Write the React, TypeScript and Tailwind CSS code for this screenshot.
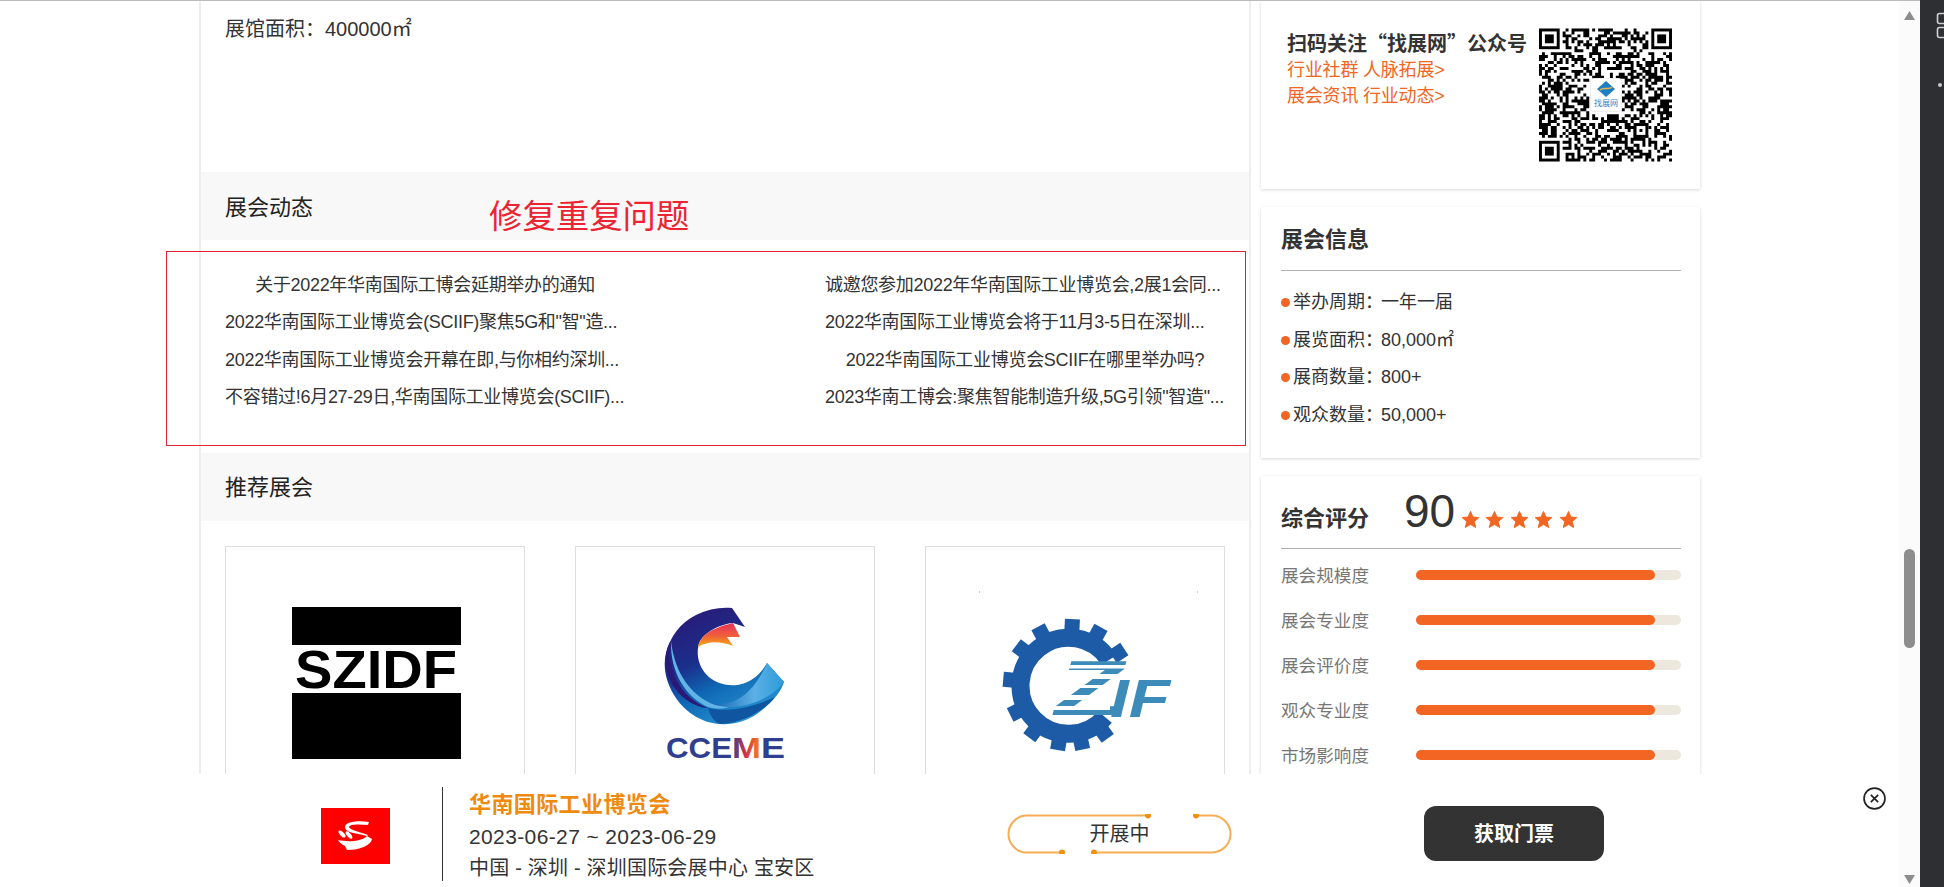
const LEFT_NEWS = [
  "关于2022年华南国际工博会延期举办的通知",
  "2022华南国际工业博览会(SCIIF)聚焦5G和\"智\"造...",
  "2022华南国际工业博览会开幕在即,与你相约深圳...",
  "不容错过!6月27-29日,华南国际工业博览会(SCIIF)...",
];
const RIGHT_NEWS = [
  "诚邀您参加2022年华南国际工业博览会,2展1会同...",
  "2022华南国际工业博览会将于11月3-5日在深圳...",
  "2022华南国际工业博览会SCIIF在哪里举办吗?",
  "2023华南工博会:聚焦智能制造升级,5G引领\"智造\"...",
];
const INFO_ROWS = [
  ["举办周期：", "一年一届"],
  ["展览面积：", "80,000㎡"],
  ["展商数量：", "800+"],
  ["观众数量：", "50,000+"],
];
const SCORE_ROWS = ["展会规模度", "展会专业度", "展会评价度", "观众专业度", "市场影响度"];

// Not the real code: same module size and finder layout, the data modules are seeded noise
const QR_SIZE = 45;
function qrPath() {
  let seed = 20230627;
  const next = () => {
    seed = (seed * 1103515245 + 12345) & 0x7fffffff;
    return (seed >> 12) % 100;
  };
  const inFinder = (x: number, y: number) =>
    (x < 8 && y < 8) || (x > QR_SIZE - 9 && y < 8) || (x < 8 && y > QR_SIZE - 9);
  const inLogo = (x: number, y: number) => x > 16 && x < 28 && y > 16 && y < 29;
  let d = "";
  for (let y = 0; y < QR_SIZE; y++) {
    for (let x = 0; x < QR_SIZE; x++) {
      if (inFinder(x, y) || inLogo(x, y)) continue;
      if (next() < 52) d += `M${x} ${y}h1v1h-1z`;
    }
  }
  return d;
}

function Finder({ x, y }: { x: number; y: number }) {
  return (
    <g>
      <rect x={x} y={y} width="7" height="7" fill="#000" />
      <rect x={x + 1} y={y + 1} width="5" height="5" fill="#fff" />
      <rect x={x + 2} y={y + 2} width="3" height="3" fill="#000" />
    </g>
  );
}

function QrCode() {
  return (
    <div className="relative w-[133px] h-[134px] shrink-0">
      <svg viewBox="0 0 45 45" className="w-full h-full">
        <path d={qrPath()} fill="#000" />
        <Finder x={0} y={0} />
        <Finder x={38} y={0} />
        <Finder x={0} y={38} />
        <rect x="32" y="32" width="5" height="5" fill="#000" />
        <rect x="33" y="33" width="3" height="3" fill="#fff" />
        <rect x="34" y="34" width="1" height="1" fill="#000" />
      </svg>
      <svg viewBox="0 0 32 34" className="absolute left-[51px] top-[50px] w-[32px] h-[34px]">
        <rect x="0.5" y="0.5" width="31" height="33" rx="3" fill="#fff" stroke="#eee" />
        <path d="M16 3l9 8-9 8-9-8z" fill="#1f7fc4" />
        <path d="M10 12c4-4 8 1 12-3" stroke="#e9b44c" strokeWidth="1.5" fill="none" />
        <text x="16" y="28" textAnchor="middle" fontSize="8" fill="#2a86c8">找展网</text>
      </svg>
    </div>
  );
}

function Star() {
  return (
    <svg viewBox="0 0 20 20" className="w-[19px] h-[19px] shrink-0">
      <polygon
        points="10,1.5 12.6,7.4 18.8,8 14,12.2 15.5,18.5 10,15.2 4.5,18.5 6,12.2 1.2,8 7.4,7.4"
        fill="#f26522"
        stroke="#f26522"
        strokeWidth="1"
        strokeLinejoin="round"
      />
    </svg>
  );
}

function SzidfLogo() {
  return (
    <svg viewBox="0 0 170 152" className="w-[170px] h-[152px] ml-[3px]">
      <rect x="0" y="0" width="169" height="38" fill="#000" />
      <text x="3" y="81" fontFamily="Liberation Sans" fontWeight="700" fontSize="53" textLength="162" lengthAdjust="spacingAndGlyphs" fill="#000">SZIDF</text>
      <rect x="0" y="86" width="169" height="66" fill="#000" />
    </svg>
  );
}

function CcemeLogo() {
  return (
    <svg viewBox="0 0 150 175" className="w-[150px] h-[175px]">
      <defs>
        <linearGradient id="ccBody" x1="0.25" y1="0" x2="0.75" y2="1">
          <stop offset="0" stopColor="#2b1a78" />
          <stop offset="0.38" stopColor="#1a2f8c" />
          <stop offset="0.62" stopColor="#0f68b4" />
          <stop offset="1" stopColor="#2b9bd8" />
        </linearGradient>
        <linearGradient id="ccTip" x1="0" y1="0" x2="1" y2="0">
          <stop offset="0" stopColor="#0f62ae" />
          <stop offset="0.6" stopColor="#5cb0e6" />
          <stop offset="1" stopColor="#2b9bd8" />
        </linearGradient>
        <linearGradient id="ccFlame" x1="0.5" y1="0" x2="0.5" y2="1">
          <stop offset="0" stopColor="#e5305c" />
          <stop offset="0.55" stopColor="#f0613a" />
          <stop offset="1" stopColor="#f7ac0c" />
        </linearGradient>
        <linearGradient id="ccM" x1="0" y1="0" x2="1" y2="0">
          <stop offset="0" stopColor="#2f3f8f" />
          <stop offset="0.5" stopColor="#d8343f" />
          <stop offset="1" stopColor="#f08a20" />
        </linearGradient>
      </defs>
      <path d="M82 13L95 32L83 28C72 29 57 35 50 46C46 55 47 68 55 78C65 90 82 93 95 88C105 84 112 77 117 68L134 87C131 97 122 108 107 119C95 127 82 130 70 129C50 128 33 115 24 100C15 85 13 70 16 58C20 42 30 28 46 20C58 14 70 12 82 13Z" fill="url(#ccBody)" />
      <path d="M20 47C17 75 30 102 58 113C42 112 27 100 20 85C14 72 14 58 20 47Z" fill="#2a1a78" />
      <path d="M21 46C24 72 36 96 60 108C68 111 76 112 84 110C74 115 66 114 58 112C36 102 20 78 21 46Z" fill="#62b4e6" />
      <path d="M60 108C78 112 100 106 117 68L134 87C128 96 116 104 100 109C86 113 72 113 60 108Z" fill="url(#ccTip)" />
      <path d="M58 113C78 118 104 112 125 102C116 114 94 128 70 129C64 127 60 120 58 113Z" fill="#0f55a0" />
      <path d="M48 52C50 42 58 34 83 28L90 42L77 42L83 51C70 46 58 46 48 52Z" fill="url(#ccFlame)" />
      <g fontFamily="Liberation Sans" fontWeight="700" fontSize="30">
        <text x="16" y="163" textLength="66" lengthAdjust="spacingAndGlyphs" fill="#2f3f8f">CCE</text>
        <text x="82" y="163" textLength="29" lengthAdjust="spacingAndGlyphs" fill="url(#ccM)">M</text>
        <text x="111" y="163" textLength="24" lengthAdjust="spacingAndGlyphs" fill="#2f3f8f">E</text>
      </g>
    </svg>
  );
}

const GEAR_TEETH = [-33, -61, -87, -118, -143, -175, 153, 127, 100, 78, 54];

function ZifLogo() {
  return (
    <svg viewBox="-64 -9 298 180" className="w-[298px] h-[180px]">
      <rect x="-11" y="-11" width="1" height="4" fill="#ccc" />
      <rect x="207" y="-11" width="1" height="4" fill="#ccc" />
      <g fill="#1d5ba6">
        {GEAR_TEETH.map((a) => (
          <rect key={a} x="-7.5" y="-66" width="15" height="14" transform={`translate(79 85) rotate(${a + 90})`} />
        ))}
      </g>
      <path d="M119 60A48 48 0 1 0 115 117" fill="none" stroke="#1d5ba6" strokeWidth="18" />
      <text x="65" y="115" fontFamily="Liberation Sans" fontWeight="700" fontStyle="italic" fontSize="77" textLength="68" lengthAdjust="spacingAndGlyphs" fill="#3d8bb8">Z</text>
      <g fill="#fff">
        <rect x="60" y="65" width="80" height="3.5" />
        <rect x="60" y="74" width="80" height="5" />
        <rect x="60" y="85" width="60" height="3" />
        <rect x="60" y="95" width="60" height="5" />
        <rect x="60" y="106" width="60" height="4" />
      </g>
      <text x="120" y="117" fontFamily="Liberation Sans" fontWeight="700" fontStyle="italic" fontSize="54" textLength="60" lengthAdjust="spacingAndGlyphs" fill="#3d8bb8">IF</text>
    </svg>
  );
}

function ExpoLogo() {
  return (
    <svg viewBox="0 0 69 56" className="w-[69px] h-[56px] mt-[34px] shrink-0">
      <rect width="69" height="56" fill="#ff0000" />
      <path d="M48 14C36 12 24 14 24 19C24 25 36 25 46 28L47 27C40 24 28 22 28 19C28 16 38 16 47 17Z" fill="#fff" />
      <path d="M51 31C50 37 40 42 26 42L24 38C20 36 18 34 17 32C26 34 40 34 46 28Z" fill="#fff" />
      <ellipse cx="21" cy="26" rx="4.5" ry="2" fill="#fff" transform="rotate(45 21 26)" />
      <ellipse cx="28" cy="27" rx="4.5" ry="2" fill="#fff" transform="rotate(50 28 27)" />
    </svg>
  );
}

function StatusPill() {
  return (
    <div className="relative w-[225px] h-[40px] mt-[40px] flex items-center justify-center text-[20px] text-[#333]">
      <svg viewBox="0 0 225 40" className="absolute inset-0 w-full h-full">
        <path d="M141 1.5H20A18.5 18.5 0 0 0 20 38.5H55M87 38.5H205A18.5 18.5 0 0 0 205 1.5H189" fill="none" stroke="#f6ad55" strokeWidth="2" />
        <g fill="#f09010">
          <circle cx="141" cy="1.5" r="3" />
          <circle cx="189" cy="1.5" r="3" />
          <circle cx="55" cy="38.5" r="3" />
          <circle cx="87" cy="38.5" r="3" />
        </g>
      </svg>
      <span className="relative -mt-px">开展中</span>
    </div>
  );
}

function Triangle({ down }: { down?: boolean }) {
  return (
    <svg viewBox="0 0 11 9" className="w-[11px] h-[9px] shrink-0">
      <polygon points={down ? "0,0 11,0 5.5,9" : "5.5,0 11,9 0,9"} fill="#8d8d8d" />
    </svg>
  );
}

function Card({ className, children }: { className: string; children: React.ReactNode }) {
  return (
    <div className={`w-[439px] bg-white shadow-[0_1px_3px_rgba(0,0,0,0.16)] ${className}`}>{children}</div>
  );
}

function NewsCell({ text }: { text: string }) {
  return <div className={`whitespace-nowrap ${text.endsWith("...") ? "text-left" : "text-center"}`}>{text}</div>;
}

export default function App() {
  return (
    <div className="w-[1944px] h-[887px] flex overflow-hidden bg-white text-[#333] font-['Liberation_Sans','Noto_Sans_CJK_SC',sans-serif]">
      <div className="relative w-[1920px] h-[887px] flex flex-col border-t border-[#bbb] overflow-hidden">
        <div className="flex flex-1 overflow-hidden">
          <div className="relative w-[1899px] overflow-hidden flex pl-[199px]">
            {/* Main column */}
            <div className="w-[1052px] shrink-0 border-x-2 border-[#eee] h-[900px]">
              <div className="h-[171px] pl-[24px] pt-[13px] text-[20px] leading-[30px]">展馆面积：400000㎡</div>
              <div className="h-[68px] bg-[#f8f8f8] pl-[24px] pt-[2px] flex items-center text-[22px] text-[#222]">展会动态</div>
              <div className="h-[213px] pl-[24px] pt-[27px] text-[18px] leading-[37.33px] tracking-[-0.3px]">
                <div className="grid grid-cols-[400px_400px] gap-x-[200px]">
                  {LEFT_NEWS.map((item, i) => (
                    <div key={item} className="contents">
                      <NewsCell text={item} />
                      <NewsCell text={RIGHT_NEWS[i]} />
                    </div>
                  ))}
                </div>
              </div>
              <div className="h-[68px] bg-[#f8f8f8] pl-[24px] flex items-center text-[22px] text-[#222]">推荐展会</div>
              <div className="pl-[24px] pt-[25px] flex gap-[50px]">
                <div className="w-[300px] h-[300px] border border-[#ddd] flex justify-center pt-[60px]">
                  <SzidfLogo />
                </div>
                <div className="w-[300px] h-[300px] border border-[#ddd] flex justify-center pt-[48px]">
                  <CcemeLogo />
                </div>
                <div className="w-[300px] h-[300px] border border-[#ddd] flex justify-center pt-[44px]">
                  <ZifLogo />
                </div>
              </div>
            </div>

            {/* Right column */}
            <div className="ml-[10px] shrink-0 flex flex-col gap-[18px]">
              <Card className="h-[188px] flex pl-[26px] pt-[27px]">
                <div className="w-[252px] shrink-0">
                  <div className="text-[20px] leading-[30px] font-bold text-[#333] font-['Noto_Sans_CJK_SC',sans-serif]">扫码关注“找展网”公众号</div>
                  <div className="-mt-px text-[18px] leading-[26px] tracking-[-0.2px] text-[#f26522]">
                    <div>行业社群 人脉拓展&gt;</div>
                    <div>展会资讯 行业动态&gt;</div>
                  </div>
                </div>
                <QrCode />
              </Card>

              <Card className="h-[251px] pl-[20px] pr-[19px] pt-[18px]">
                <div className="text-[22px] leading-[30px] font-bold">展会信息</div>
                <div className="h-px bg-[#b0b0b0] mt-[15px]" />
                <div className="mt-[13px] text-[18px] leading-[37.5px]">
                  {INFO_ROWS.map(([label, value]) => (
                    <div key={label} className="flex items-center">
                      <span className="w-[9px] h-[9px] rounded-full bg-[#f26522] mr-[3px] shrink-0" />
                      <span className="w-[88px] shrink-0 whitespace-nowrap">{label}</span>
                      <span className="whitespace-nowrap">{value}</span>
                    </div>
                  ))}
                </div>
              </Card>

              <Card className="h-[400px] pl-[20px] pr-[19px]">
                <div className="h-[72px] flex">
                  <div className="text-[22px] leading-[30px] font-bold mt-[28px] w-[123px]">综合评分</div>
                  <div className="text-[46px] leading-[48px] text-[#333] mt-[11px] w-[57px]">90</div>
                  <div className="flex gap-[5.4px] mt-[34px] h-[19px]">
                    <Star />
                    <Star />
                    <Star />
                    <Star />
                    <Star />
                  </div>
                </div>
                <div className="h-px bg-[#b0b0b0]" />
                <div className="mt-[3px]">
                  {SCORE_ROWS.map((label) => (
                    <div key={label} className="h-[45px] flex items-center">
                      <span className="w-[135px] pt-[3px] text-[17.6px] text-[#777]">{label}</span>
                      <div className="flex-1 h-[10px] rounded-full bg-[#ede8de]">
                        <div className="w-[90%] h-full rounded-full bg-[#f26522]" />
                      </div>
                    </div>
                  ))}
                </div>
              </Card>
            </div>

            {/* Red annotation drawn over the page */}
            <div className="absolute left-[166px] top-[250px] w-[1080px] h-[195px] border border-[#e0242f]" />
            <div className="absolute left-[489px] top-[194px] text-[33.4px] leading-[44px] text-[#ec2330] whitespace-nowrap">修复重复问题</div>

            {/* Fixed ticket bar */}
            <div className="absolute left-0 bottom-0 w-full h-[113px] bg-white flex pl-[321px]">
              <ExpoLogo />
              <div className="w-px h-[94px] bg-[#333] ml-[52px] mt-[13px] shrink-0" />
              <div className="w-[538px] ml-[26px] pt-[14px] shrink-0">
                <div className="text-[22px] leading-[33px] font-bold tracking-[0.4px] text-[#ee8a0e]">华南国际工业博览会</div>
                <div className="text-[21px] leading-[32px] tracking-[0.38px]">2023-06-27 ~ 2023-06-29</div>
                <div className="text-[20px] leading-[30px] tracking-[0.2px]">中国 - 深圳 - 深圳国际会展中心 宝安区</div>
              </div>
              <StatusPill />
              <div className="w-[180px] h-[55px] rounded-[12px] bg-[#333] ml-[192px] mt-[32px] flex items-center justify-center text-[20px] font-bold text-white">获取门票</div>
              <svg viewBox="0 0 22 22" className="absolute left-[1863px] top-[13px] w-[23px] h-[23px]">
                <circle cx="11" cy="11" r="10" fill="none" stroke="#222" strokeWidth="1.6" />
                <path d="M7.5 7.5l7 7M14.5 7.5l-7 7" stroke="#222" strokeWidth="1.6" />
              </svg>
            </div>
          </div>

          {/* Browser scrollbar */}
          <div className="w-[21px] shrink-0 bg-[#fbfbfb] flex flex-col items-center">
            <div className="mt-[10px]">
              <Triangle />
            </div>
            <div className="w-[11px] h-[99px] mt-[529px] rounded-full bg-[#8d8d8d] shrink-0" />
            <div className="mt-[227px]">
              <Triangle down />
            </div>
          </div>
        </div>
      </div>

      {/* Dark side rail */}
      <div className="w-[24px] h-[887px] bg-[#2e2f33] shrink-0">
        <svg viewBox="0 0 24 100" className="w-[24px] h-[100px]">
          <rect x="17.5" y="13.5" width="12" height="10" rx="2" fill="none" stroke="#d0d0d0" strokeWidth="1.6" />
          <rect x="17.5" y="27.5" width="12" height="10" rx="2" fill="none" stroke="#d0d0d0" strokeWidth="1.6" />
          <circle cx="20" cy="85" r="2" fill="#c8c8c8" />
        </svg>
      </div>
    </div>
  );
}
